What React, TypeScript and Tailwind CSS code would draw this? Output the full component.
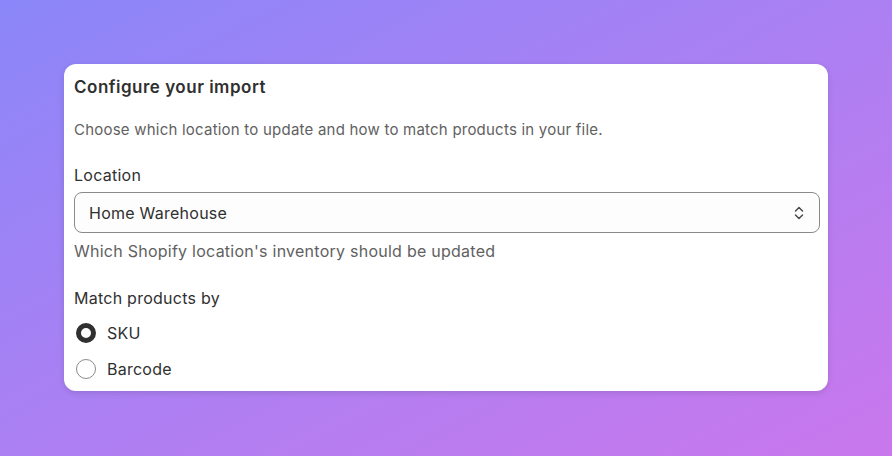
import React from "react";

export default function App() {
  return (
    <div className="w-[892px] h-[456px] bg-gradient-to-br from-[#8a86f9] to-[#c977ec] p-[64px] font-['Inter',sans-serif]">
      <div className="bg-white rounded-[12px] shadow-[0_2px_6px_rgba(0,0,0,0.12)] pl-[10px] pr-[8px] pt-[11px] pb-[12px] flex flex-col">
        <div className="text-[17px] leading-[24px] font-semibold tracking-[0.5px] text-[#303030]">Configure your import</div>
        <div className="mt-[21px] text-[15px] leading-[20px] tracking-[0.22px] text-[#616161]">
          Choose which location to update and how to match products in your file.
        </div>
        <div className="mt-[24px] text-[16px] leading-[22px] tracking-[0.25px] text-[#303030]">Location</div>
        <div className="mt-[6px] h-[41px] rounded-[8px] border border-[#8a8a8a] bg-[#fdfdfd] flex items-center justify-between pl-[14px] pr-[14px]">
          <span className="text-[16px] tracking-[0.25px] text-[#303030]">Home Warehouse</span>
          <svg width="12" height="16" viewBox="0 0 12 16" fill="none" stroke="#4a4a4a" strokeWidth="1.5" strokeLinecap="round" strokeLinejoin="round">
            <path d="M2.5 6 L6 2.5 L9.5 6" />
            <path d="M2.5 10 L6 13.5 L9.5 10" />
          </svg>
        </div>
        <div className="mt-[8px] text-[16px] leading-[20px] tracking-[0.25px] text-[#616161]">Which Shopify location's inventory should be updated</div>
        <div className="mt-[27px] text-[16px] leading-[20px] tracking-[0.25px] text-[#303030]">Match products by</div>
        <div className="mt-[15px] flex items-center h-[20px]">
          <span className="w-[20px] h-[20px] ml-[2px] rounded-full border-[5px] border-[#303030] bg-white" />
          <span className="ml-[11px] text-[16px] tracking-[0.25px] text-[#303030]">SKU</span>
        </div>
        <div className="mt-[16px] flex items-center h-[20px]">
          <span className="w-[20px] h-[20px] ml-[2px] rounded-full border border-[#8a8a8a] bg-white" />
          <span className="ml-[11px] text-[16px] tracking-[0.25px] text-[#303030]">Barcode</span>
        </div>
      </div>
    </div>
  );
}
